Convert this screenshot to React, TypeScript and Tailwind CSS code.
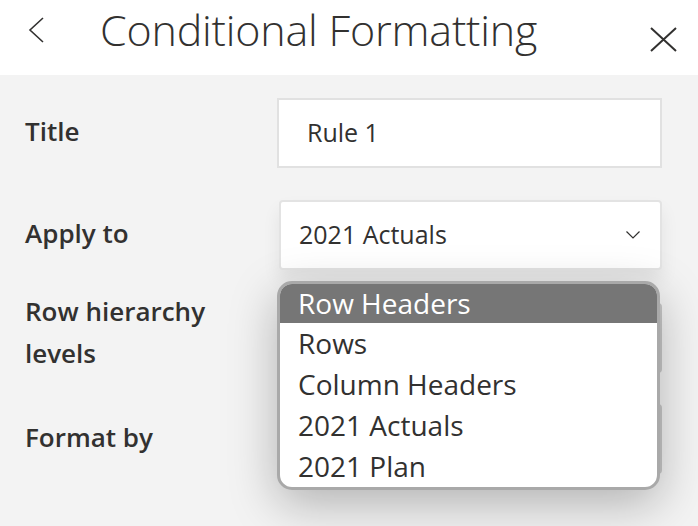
const options = ["Row Headers", "Rows", "Column Headers", "2021 Actuals", "2021 Plan"];

function ChevronDown() {
  return (
    <svg width="16" height="10" viewBox="0 0 16 10" fill="none" className="text-[#323130]">
      <path d="M1.5 1.5 L8 8 L14.5 1.5" stroke="currentColor" strokeWidth="1.2" />
    </svg>
  );
}

function Field({
  label,
  children,
  labelClass = "mt-[-4px]",
}: {
  label: React.ReactNode;
  children: React.ReactNode;
  labelClass?: string;
}) {
  return (
    <div className="h-[70px] grid grid-cols-[252px_385px] items-center">
      <div className={`${labelClass} text-[26px] font-semibold leading-[42px] text-[#323130] whitespace-nowrap`}>
        {label}
      </div>
      {children}
    </div>
  );
}

export default function App() {
  return (
    <div className="w-[698px] h-[526px] bg-[#f3f3f3] overflow-hidden font-['Open_Sans',sans-serif] text-[#323130]">
      <header className="h-[75px] bg-white flex items-start">
        <button className="ml-[28px] mt-[17px] w-[17px] h-[26px] flex items-center justify-center">
          <svg width="17" height="26" viewBox="0 0 17 26" fill="none">
            <path d="M15 1 L2 13 L15 25" stroke="#323130" strokeWidth="1.6" />
          </svg>
        </button>
        <h1 className="ml-[55px] mt-0 text-[43px] font-light leading-[59px] tracking-[-0.2px] whitespace-nowrap">
          Conditional Formatting
        </h1>
        <button className="ml-auto mr-[21px] mt-[27px]">
          <svg width="27" height="25" viewBox="0 0 27 25" fill="none">
            <path d="M1 1 L26 24 M26 1 L1 24" stroke="#323130" strokeWidth="2" />
          </svg>
        </button>
      </header>

      <div className="pl-[25px] pt-[23px] flex flex-col gap-[32px]">
        <Field label="Title">
          <div className="h-[70px] bg-white border-2 border-[#e1e1e1] flex items-center pl-[28px] text-[25px]">
            Rule 1
          </div>
        </Field>

        <Field label="Apply to">
          <div className="relative ml-[2px]">
            <div className="h-[70px] bg-white border-2 border-[#e3e3e3] rounded-[4px] flex items-center pl-[18px] pr-[19px] text-[25px] shadow-[0_10px_18px_rgba(0,0,0,0.07)]">
              <span className="flex-1">2021 Actuals</span>
              <ChevronDown />
            </div>

            <ul className="absolute z-10 left-[-2px] top-[calc(100%+11px)] w-[383px] bg-white border-[3px] border-[#a9a9a9] rounded-[15px] overflow-hidden shadow-[0_14px_48px_rgba(0,0,0,0.27)] text-[28px]">
              {options.map((o, i) => (
                <li
                  key={o}
                  className={
                    i === 0
                      ? "h-[39px] leading-[39px] pl-[18px] bg-[#767676] text-white"
                      : "h-[41px] leading-[41px] pl-[18px] text-[#323130]"
                  }
                >
                  {o}
                </li>
              ))}
            </ul>
          </div>
        </Field>

        <Field label={<>Row hierarchy<br />levels</>} labelClass="mt-[-12px]">
          <div className="ml-[2px] h-[70px] bg-white border-2 border-[#c8c8c8] rounded-[4px]" />
        </Field>

        <Field label="Format by">
          <div className="ml-[2px] h-[70px] bg-white border-2 border-[#c8c8c8] rounded-[4px]" />
        </Field>
      </div>
    </div>
  );
}
